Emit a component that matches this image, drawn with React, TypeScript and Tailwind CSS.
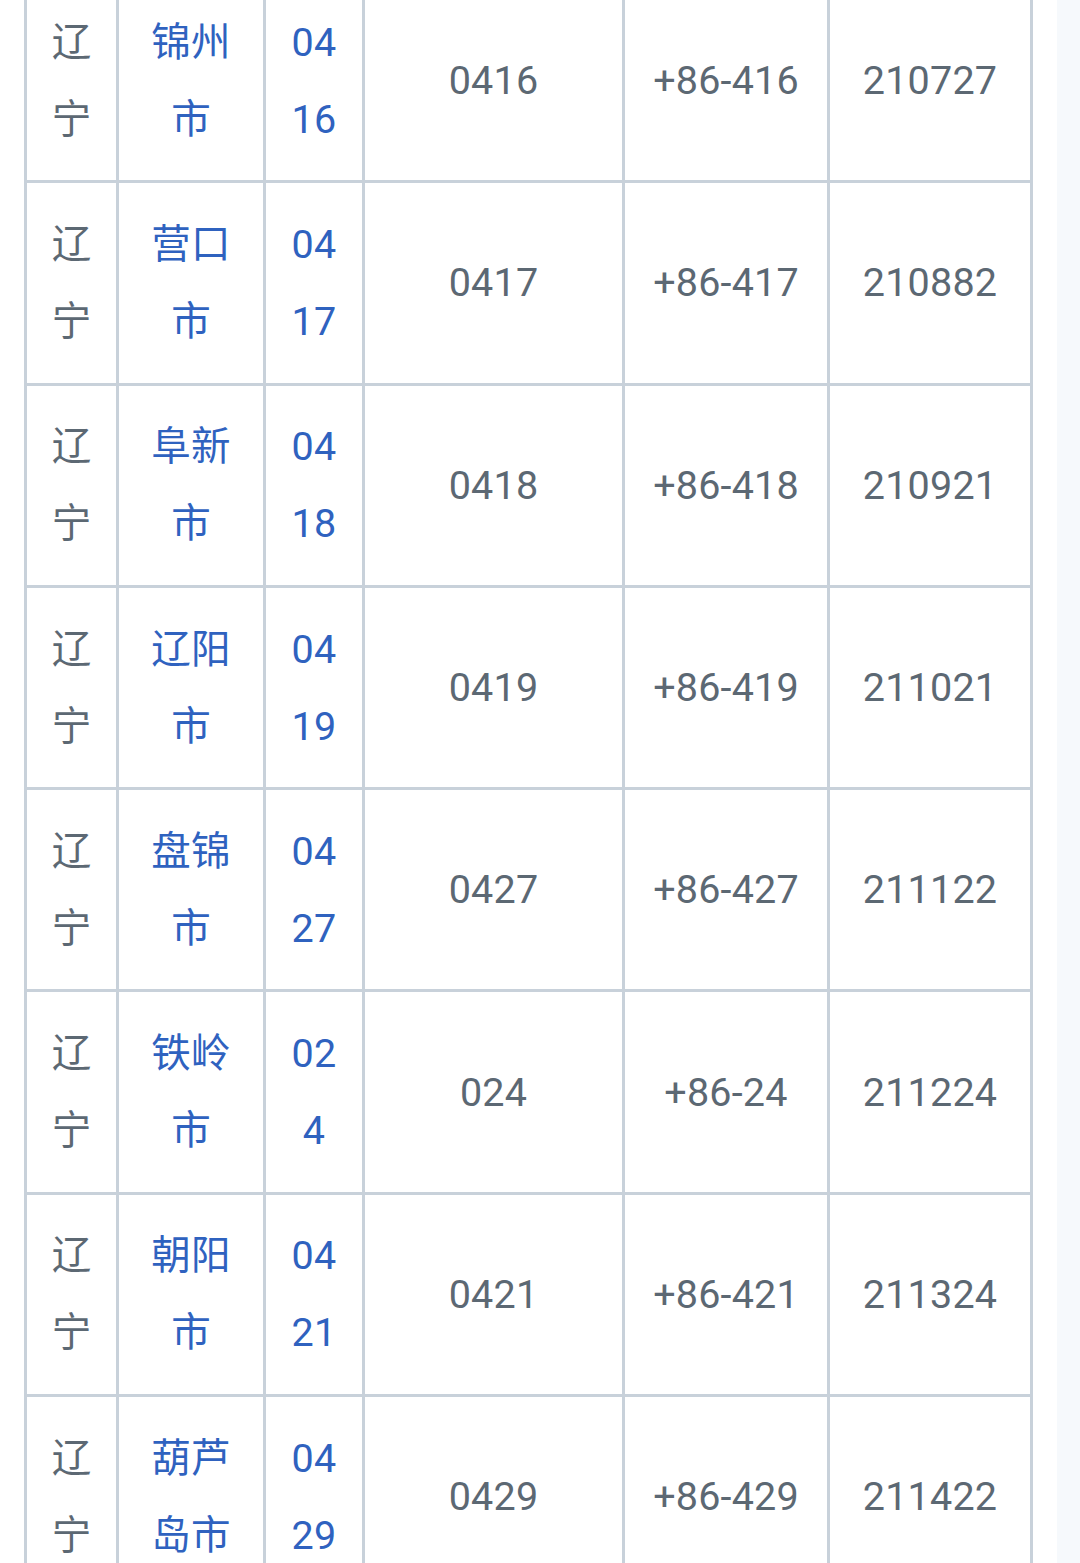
import React from "react";

type Row = {
  city: [string, string];
  code: [string, string];
  area: string;
  intl: string;
  post: string;
};

const rows: Row[] = [
  { city: ["锦州", "市"], code: ["04", "16"], area: "0416", intl: "+86-416", post: "210727" },
  { city: ["营口", "市"], code: ["04", "17"], area: "0417", intl: "+86-417", post: "210882" },
  { city: ["阜新", "市"], code: ["04", "18"], area: "0418", intl: "+86-418", post: "210921" },
  { city: ["辽阳", "市"], code: ["04", "19"], area: "0419", intl: "+86-419", post: "211021" },
  { city: ["盘锦", "市"], code: ["04", "27"], area: "0427", intl: "+86-427", post: "211122" },
  { city: ["铁岭", "市"], code: ["02", "4"], area: "024", intl: "+86-24", post: "211224" },
  { city: ["朝阳", "市"], code: ["04", "21"], area: "0421", intl: "+86-421", post: "211324" },
  { city: ["葫芦", "岛市"], code: ["04", "29"], area: "0429", intl: "+86-429", post: "211422" },
];

const font = { fontFamily: 'Roboto, "Noto Sans CJK SC", "Noto Sans", sans-serif' };

function TwoLine({ a, b, cls }: { a: string; b: string; cls: string }) {
  return (
    <div className={"flex flex-col items-center leading-[77px] " + cls}>
      <span>{a}</span>
      <span>{b}</span>
    </div>
  );
}

export default function App() {
  return (
    <div className="w-[1080px] h-[1563px] overflow-hidden bg-white flex" style={font}>
      <div className="w-[1057px] shrink-0">
        <div className="ml-[24px] mt-[-22px] w-[1009px] border-l-[3px] border-r-[3px] border-[#c8d1da] text-[39.5px] tracking-[0.2px]">
          {rows.map((r, i) => (
            <div
              key={i}
              className="flex h-[202.3px] border-t-[3px] border-[#c8d1da] box-border"
            >
              <div className="w-[89px] shrink-0 flex items-center justify-center">
                <TwoLine a="辽" b="宁" cls="text-[#5c6873]" />
              </div>
              <div className="w-[147px] shrink-0 border-l-[3px] border-[#c8d1da] flex items-center justify-center">
                <TwoLine a={r.city[0]} b={r.city[1]} cls="text-[#2f62bf]" />
              </div>
              <div className="w-[99px] shrink-0 border-l-[3px] border-[#c8d1da] flex items-center justify-center">
                <TwoLine a={r.code[0]} b={r.code[1]} cls="text-[#2f62bf]" />
              </div>
              <div className="w-[260px] shrink-0 border-l-[3px] border-[#c8d1da] flex items-center justify-center text-[#5c6873]">
                {r.area}
              </div>
              <div className="w-[205px] shrink-0 border-l-[3px] border-[#c8d1da] flex items-center justify-center text-[#5c6873]">
                {r.intl}
              </div>
              <div className="flex-1 border-l-[3px] border-[#c8d1da] flex items-center justify-center text-[#5c6873]">
                {r.post}
              </div>
            </div>
          ))}
        </div>
      </div>
      <div className="flex-1 bg-[#f6f9fc]" />
    </div>
  );
}
